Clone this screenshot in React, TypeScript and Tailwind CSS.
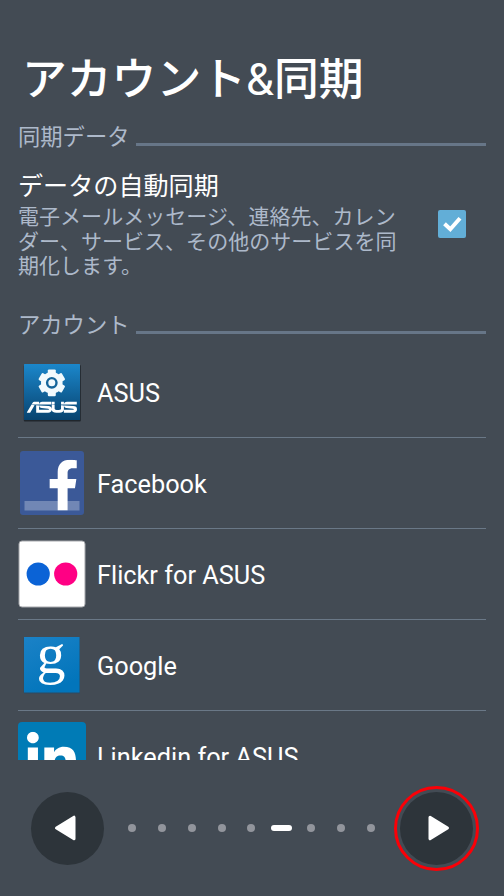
import type { ReactNode } from "react";
import { FaFacebookF, FaLinkedinIn } from "react-icons/fa";
import { SiAsus } from "react-icons/si";

function AsusIcon() {
  return (
    <svg viewBox="0 0 68 68" className="size-[68px]">
      <defs>
        <linearGradient id="asus" x1="0" y1="0" x2="0" y2="1">
          <stop offset="0" stopColor="#1b87cb" />
          <stop offset="1" stopColor="#08436f" />
        </linearGradient>
      </defs>
      <rect x="5.8" y="7" width="57" height="56.5" rx="1" fill="#20262c" />
      <rect x="6" y="6" width="56" height="56" rx="0.5" fill="url(#asus)" />
      <g fill="#f1fafd">
        <circle cx="33.8" cy="24.8" r="10.8" />
        {[0, 60, 120].map((angle) => (
          <rect
            key={angle}
            x="29.8"
            y="11.4"
            width="8"
            height="26.8"
            rx="1.2"
            transform={`rotate(${angle} 33.8 24.8)`}
          />
        ))}
      </g>
      <circle cx="33.8" cy="24.8" r="4.7" fill="none" stroke="#14659a" strokeWidth="2.4" />
      <g transform="translate(8.6 22.8) scale(2.1 2.2)">
        <SiAsus size={24} color="#ffffff" />
      </g>
    </svg>
  );
}

function FacebookIcon() {
  return (
    <svg viewBox="0 0 68 68" className="size-[68px]">
      <rect x="2" y="2" width="64" height="64" rx="3" fill="#3b5998" />
      <rect x="6.5" y="52" width="55" height="9.5" fill="#7187b5" />
      <g transform="translate(29.4 10.7) scale(0.316 0.507)">
        <FaFacebookF size={100} preserveAspectRatio="none" color="#ffffff" />
      </g>
    </svg>
  );
}

function FlickrIcon() {
  return (
    <svg viewBox="0 0 68 68" className="size-[68px]">
      <rect x="1" y="1" width="66" height="66" rx="3" fill="#fff" stroke="#a5a7ab" />
      <circle cx="20.2" cy="34" r="11.6" fill="#0b63d6" />
      <circle cx="47.7" cy="34" r="11.6" fill="#ff0084" />
    </svg>
  );
}

function GoogleIcon() {
  return (
    <svg viewBox="0 0 68 68" className="size-[68px] overflow-visible">
      <defs>
        <linearGradient id="google" x1="0" y1="0" x2="0.5" y2="1">
          <stop offset="0" stopColor="#1b82c7" />
          <stop offset="1" stopColor="#0275bb" />
        </linearGradient>
      </defs>
      <rect x="5.7" y="6.2" width="56.3" height="56.3" rx="1" fill="#2c4a62" />
      <rect x="6" y="6" width="55.5" height="55.5" fill="url(#google)" />
      <text
        x="33"
        y="42"
        textAnchor="middle"
        fontSize="58"
        fill="#fff"
        fontFamily="'Liberation Serif', serif"
      >
        g
      </text>
    </svg>
  );
}

function LinkedinIcon() {
  return (
    <svg viewBox="0 0 68 68" className="size-[68px]">
      <rect width="68" height="68" rx="4" fill="#007bb6" />
      <g transform="translate(9 9.7) scale(0.49 0.545)">
        <FaLinkedinIn size={100} preserveAspectRatio="none" color="#ffffff" />
      </g>
    </svg>
  );
}

const accounts: { name: string; icon: ReactNode }[] = [
  { name: "ASUS", icon: <AsusIcon /> },
  { name: "Facebook", icon: <FacebookIcon /> },
  { name: "Flickr for ASUS", icon: <FlickrIcon /> },
  { name: "Google", icon: <GoogleIcon /> },
  { name: "Linkedin for ASUS", icon: <LinkedinIcon /> },
];

function SectionHeader({ title }: { title: string }) {
  return (
    <div className="flex h-8 items-center">
      <h2 className="w-[118px] shrink-0 whitespace-nowrap pt-0.5 text-[22.3px] leading-8 text-[#adb9ca]">{title}</h2>
      <div className="mt-[17px] h-[3px] flex-1 bg-[#677688]" />
    </div>
  );
}

function Triangle({ className }: { className?: string }) {
  return (
    <svg viewBox="0 0 24 28" className={className} width="24" height="28">
      <path
        d="M3 3.2 L20.5 14 L3 24.8 Z"
        fill="#fff"
        stroke="#fff"
        strokeWidth="3"
        strokeLinejoin="round"
      />
    </svg>
  );
}

export default function App() {
  return (
    <div className="flex h-[896px] w-[504px] flex-col overflow-hidden bg-[#434b54] font-[Roboto,'Noto_Sans_CJK_JP',sans-serif]">
      {/* Page title */}
      <h1 className="mt-12 h-[62px] whitespace-nowrap pl-[22px] text-[44.8px] font-medium leading-[64px] text-white">
        アカウント<span className="font-normal">&amp;</span>同期
      </h1>

      {/* Scrolling settings list */}
      <main className="h-[650px] shrink-0 overflow-hidden pl-[18px] pr-[18px] pt-[10px]">
        <SectionHeader title="同期データ" />

        <div className="mt-4 flex h-[110px]">
          <div className="w-[382px] shrink-0 pt-px">
            <h3 className="whitespace-nowrap text-[25.1px] leading-[36px] text-white">データの自動同期</h3>
            <p className="whitespace-nowrap text-[21px] leading-[24.5px] tracking-[0.04px] text-[#adb9ca]">
              電子メールメッセージ、連絡先、カレン
              <br />
              ダー、サービス、その他のサービスを同
              <br />
              期化します。
            </p>
          </div>
          <div className="ml-[38px] mt-[42px] flex size-7 items-center justify-center rounded-[2px] bg-[#62aed7]">
            <svg width="28" height="28" viewBox="0 0 28 28">
              <path d="M6.5 13.8 L12.3 19.2 L22 8.2" fill="none" stroke="#fff" strokeWidth="4" />
            </svg>
          </div>
        </div>

        <div className="mt-[30px]">
          <SectionHeader title="アカウント" />
        </div>

        <ul className="mt-[7px]">
          {accounts.map((account) => (
            <li key={account.name} className="flex h-[91px] items-center border-b border-[#6a7887]">
              {account.icon}
              <span className="ml-[11px] pt-1 text-[25.3px] text-white">{account.name}</span>
            </li>
          ))}
        </ul>
      </main>

      {/* Wizard navigation */}
      <nav className="flex h-[136px] shrink-0 items-center pl-[31px]">
        <button className="flex size-[73px] items-center justify-center rounded-full bg-[#2d343a]">
          <Triangle className="mr-[5px] rotate-180" />
        </button>
        <div className="ml-[13px] grid w-[269px] grid-cols-9 items-center justify-items-center">
          {[0, 1, 2, 3, 4, 5, 6, 7, 8].map((step) => (
            <span
              key={step}
              className={step === 5 ? "h-1.5 w-[21px] rounded-[3px] bg-white" : "size-2 rounded-full bg-[#92959c]"}
            />
          ))}
        </div>
        <div className="ml-2 flex size-[85px] items-center justify-center rounded-full border-3 border-[#fb0007]">
          <button className="flex size-[73px] shrink-0 items-center justify-center rounded-full bg-[#2d343a]">
            <Triangle className="ml-[5px]" />
          </button>
        </div>
      </nav>
    </div>
  );
}
